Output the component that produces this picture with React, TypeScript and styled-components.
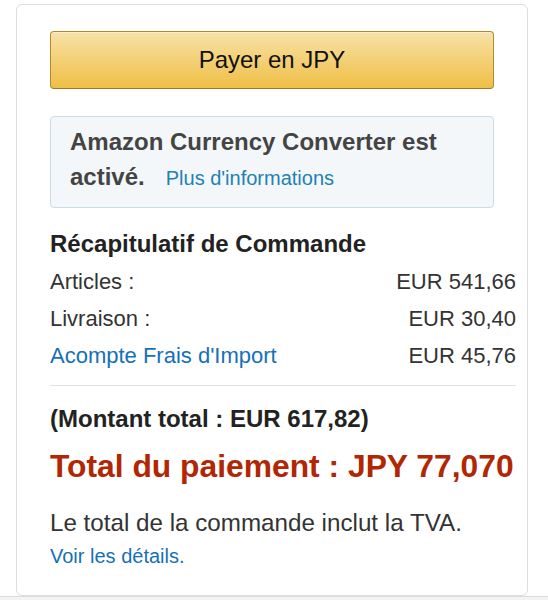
import React from "react";
import styled, { createGlobalStyle } from "styled-components";

const GlobalStyle = createGlobalStyle`
  html, body {
    margin: 0;
    padding: 0;
    background: #fff;
  }
  body {
    font-family: "Liberation Sans", Arial, sans-serif;
    color: #111;
  }
`;

const Page = styled.div`
  width: 548px;
  height: 600px;
  display: flex;
  flex-direction: column;
  overflow: hidden;
`;

const CardArea = styled.div`
  padding: 4px 20px 0 16px;
`;

const Card = styled.div`
  border: 1px solid #ddd;
  border-radius: 6px;
  padding: 26px 11px 0 33px;
  height: 592px;
  box-sizing: border-box;
`;

const Footer = styled.div`
  flex: 1;
  border-top: 1px solid #dcdcdc;
  background: #f3f3f3;
`;

const PayButton = styled.button`
  display: block;
  width: 444px;
  height: 58px;
  border: 1px solid #b08a2e;
  border-bottom-color: #9c7a28;
  border-radius: 4px;
  background: linear-gradient(to bottom, #f8e2a8, #efbf45);
  box-shadow: inset 0 1px 0 rgba(255, 255, 255, 0.45);
  font-family: inherit;
  font-size: 24px;
  color: #111;
  padding: 0;
  cursor: pointer;
`;

const InfoBox = styled.div`
  margin-top: 27px;
  width: 444px;
  box-sizing: border-box;
  border: 1px solid #c9dde8;
  border-radius: 4px;
  background: #f4f7f9;
  padding: 7px 19px 13px;
  font-size: 24px;
  line-height: 35px;
  font-weight: bold;
  color: #444;
`;

const InfoLink = styled.a`
  font-weight: normal;
  font-size: 20px;
  line-height: 1;
  color: #2181b5;
  text-decoration: none;
  margin-left: 21px;
`;

const Summary = styled.div`
  margin-top: 21px;
  display: flex;
  flex-direction: column;
`;

const Heading = styled.h3`
  margin: 0 0 4px;
  font-size: 24px;
  line-height: 30px;
  font-weight: bold;
  color: #222;
`;

const Row = styled.div`
  display: flex;
  justify-content: space-between;
  font-size: 22px;
  line-height: 37px;
  color: #333;
`;

const RowLabel = styled.span<{ $link?: boolean }>`
  color: ${(p) => (p.$link ? "#1570b8" : "#333")};
`;

const Divider = styled.hr`
  border: 0;
  border-top: 1px solid #e3e3e3;
  margin: 11px 0 18px;
`;

const Montant = styled.div`
  font-size: 24px;
  font-weight: bold;
  line-height: 30px;
  color: #222;
`;

const Total = styled.div`
  margin-top: 12px;
  font-size: 31.8px;
  font-weight: bold;
  line-height: 40px;
  white-space: nowrap;
  color: #b12704;
`;

const Note = styled.div`
  margin-top: 22px;
  font-size: 24.2px;
  line-height: 30px;
  color: #333;
`;

const DetailsLink = styled.a`
  display: block;
  margin-top: 5px;
  font-size: 20px;
  line-height: 26px;
  color: #1570b8;
  text-decoration: none;
`;

export default function App() {
  return (
    <>
      <GlobalStyle />
      <Page>
        <CardArea>
          <Card>
            <PayButton>Payer en JPY</PayButton>
            <InfoBox>
              Amazon Currency Converter est activé.
              <InfoLink href="#">Plus d'informations</InfoLink>
            </InfoBox>
            <Summary>
              <Heading>Récapitulatif de Commande</Heading>
              <Row>
                <RowLabel>Articles :</RowLabel>
                <span>EUR 541,66</span>
              </Row>
              <Row>
                <RowLabel>Livraison :</RowLabel>
                <span>EUR 30,40</span>
              </Row>
              <Row>
                <RowLabel $link>Acompte Frais d'Import</RowLabel>
                <span>EUR 45,76</span>
              </Row>
              <Divider />
              <Montant>(Montant total : EUR 617,82)</Montant>
              <Total>Total du paiement : JPY 77,070</Total>
              <Note>Le total de la commande inclut la TVA.</Note>
              <DetailsLink href="#">Voir les détails.</DetailsLink>
            </Summary>
          </Card>
        </CardArea>
        <Footer />
      </Page>
    </>
  );
}
